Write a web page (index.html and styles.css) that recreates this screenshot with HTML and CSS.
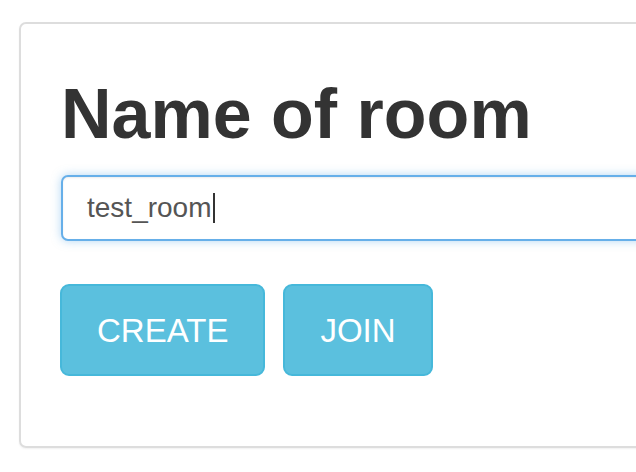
FILE: index.html
```html
<!DOCTYPE html>
<html>
<head>
<meta charset="utf-8">
<link rel="stylesheet" href="styles.css">
</head>
<body>
<div class="card">
  <h1 class="title">Name of room</h1>
  <div class="field"><span class="value">test_room</span><span class="caret"></span></div>
  <div class="actions">
    <button class="btn">CREATE</button>
    <button class="btn">JOIN</button>
  </div>
</div>
</body>
</html>
```
FILE: styles.css
```css
html, body {
  margin: 0;
  padding: 0;
  background: #fff;
  overflow: hidden;
  width: 636px;
  height: 472px;
}
body {
  font-family: "Liberation Sans", Arial, sans-serif;
}
.card {
  margin: 22px 0 0 19px;
  width: 700px;
  box-sizing: border-box;
  border: 2px solid #dddddd;
  border-radius: 7px;
  padding: 52px 40px 70px 40px;
  box-shadow: 0 1px 2px rgba(0,0,0,0.06);
}
.title {
  margin: 0;
  font-size: 70px;
  line-height: 77px;
  font-weight: 700;
  color: #333;
}
.field {
  margin-top: 22px;
  height: 66px;
  box-sizing: border-box;
  border: 2px solid #66afe9;
  border-radius: 7px;
  padding: 0 24px;
  display: flex;
  align-items: center;
  box-shadow: inset 0 1px 2px rgba(0,0,0,0.075), 0 0 10px rgba(102,175,233,0.5);
  background: #fff;
}
.value {
  font-size: 28px;
  color: #555;
  line-height: 1;
}
.caret {
  display: inline-block;
  width: 2px;
  height: 30px;
  background: #333;
  margin-left: 1px;
}
.actions {
  margin-top: 43px;
  margin-left: -1px;
  display: flex;
  gap: 18px;
}
.btn {
  height: 92px;
  box-sizing: border-box;
  padding: 0 35px;
  border: 2px solid #46b8da;
  border-radius: 9px;
  background: #5bc0de;
  color: #fff;
  font-family: "Liberation Sans", Arial, sans-serif;
  font-size: 33px;
  line-height: 1;
  margin: 0;
}
```
